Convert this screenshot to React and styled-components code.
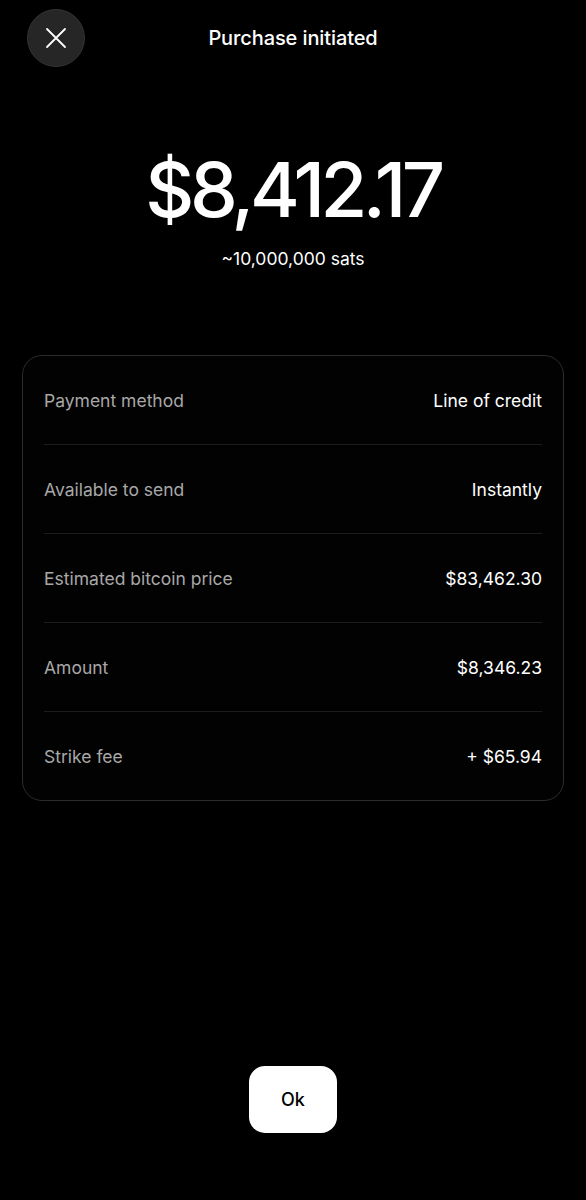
import React from 'react';
import styled, { createGlobalStyle } from 'styled-components';

const GlobalStyle = createGlobalStyle`
  html, body {
    margin: 0;
    padding: 0;
    background: #000;
  }
  body {
    font-family: Inter, "Noto Sans", "Liberation Sans", sans-serif;
    -webkit-font-smoothing: antialiased;
  }
`;

const Screen = styled.div`
  display: flex;
  flex-direction: column;
  width: 586px;
  height: 1200px;
  background: #000;
  color: #fff;
  box-sizing: border-box;
  padding-bottom: 67px;
`;

const Header = styled.div`
  display: grid;
  grid-template-columns: 1fr auto 1fr;
  align-items: center;
  padding-top: 9px;
  height: 58px;
`;

const CloseButton = styled.button`
  justify-self: start;
  margin-left: 27px;
  width: 58px;
  height: 58px;
  border-radius: 50%;
  border: 1px solid #333;
  background: #262626;
  display: flex;
  align-items: center;
  justify-content: center;
  padding: 0;
  cursor: pointer;
`;

const Title = styled.h1`
  margin: 0;
  font-size: 20px;
  font-weight: 500;
  letter-spacing: -0.1px;
  color: #fff;
`;

const AmountBlock = styled.div`
  display: flex;
  flex-direction: column;
  align-items: center;
  margin-top: 84px;
`;

const BigAmount = styled.div`
  font-size: 76px;
  font-weight: 500;
  line-height: 1;
  letter-spacing: -4.5px;
  font-variant-numeric: proportional-nums;
  font-feature-settings: "pnum" 1, "tnum" 0;
`;

const Sats = styled.div`
  margin-top: 21px;
  font-size: 17.5px;
  color: #fff;
`;

const Card = styled.div`
  margin: 86px 22px 0;
  border: 1px solid #2c2c2c;
  border-radius: 20px;
  padding: 0 21px;
  background: #020202;
`;

const Row = styled.div`
  display: flex;
  justify-content: space-between;
  align-items: center;
  height: 88px;
  font-size: 17.5px;
  & + & {
    border-top: 1px solid #1c1c1c;
  }
`;

const Label = styled.span`
  color: #a8a8a8;
`;

const Value = styled.span`
  color: #fff;
`;

const Footer = styled.div`
  margin-top: auto;
  display: flex;
  justify-content: center;
`;

const OkButton = styled.button`
  width: 88px;
  height: 67px;
  border: none;
  border-radius: 16px;
  background: #fff;
  color: #000;
  font-family: inherit;
  font-size: 18px;
  font-weight: 500;
  cursor: pointer;
`;

const details = [
  { label: 'Payment method', value: 'Line of credit' },
  { label: 'Available to send', value: 'Instantly' },
  { label: 'Estimated bitcoin price', value: '$83,462.30' },
  { label: 'Amount', value: '$8,346.23' },
  { label: 'Strike fee', value: '+ $65.94' },
];

const App = () => {
  return (
    <>
      <GlobalStyle />
      <Screen>
        <Header>
          <CloseButton aria-label="Close">
            <svg width="24" height="24" viewBox="0 0 24 24" fill="none" stroke="#fff" strokeWidth="1.8" strokeLinecap="round">
              <path d="M3 3L21 21M21 3L3 21" />
            </svg>
          </CloseButton>
          <Title>Purchase initiated</Title>
          <div />
        </Header>
        <AmountBlock>
          <BigAmount>$8,412.17</BigAmount>
          <Sats>~10,000,000 sats</Sats>
        </AmountBlock>
        <Card>
          {details.map(d => (
            <Row key={d.label}>
              <Label>{d.label}</Label>
              <Value>{d.value}</Value>
            </Row>
          ))}
        </Card>
        <Footer>
          <OkButton>Ok</OkButton>
        </Footer>
      </Screen>
    </>
  );
};

export default App;
